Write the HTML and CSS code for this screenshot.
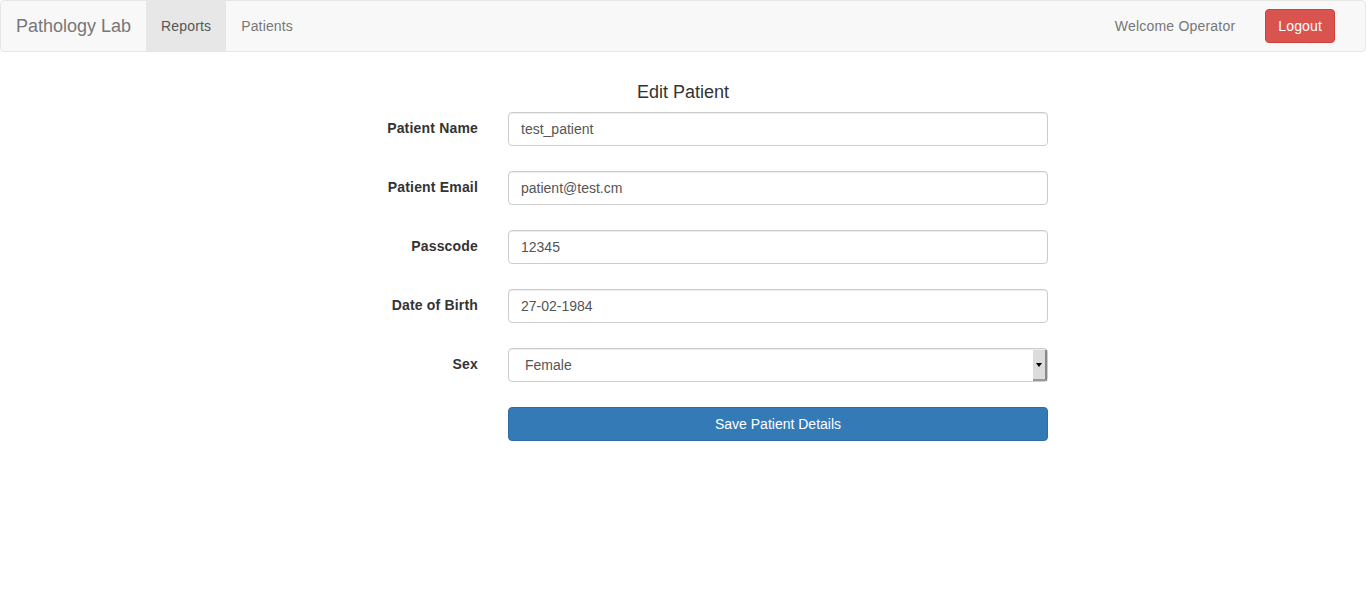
FILE: index.html
```html
<!DOCTYPE html>
<html>
<head>
<meta charset="utf-8">
<title>Edit Patient</title>
<link rel="stylesheet" href="styles.css">
</head>
<body>
<nav class="navbar">
  <div class="nav-left">
    <a class="brand" href="#">Pathology Lab</a>
    <a class="nav-link active" href="#">Reports</a>
    <a class="nav-link" href="#">Patients</a>
  </div>
  <div class="nav-right">
    <span class="welcome">Welcome Operator</span>
    <button class="btn-logout">Logout</button>
  </div>
</nav>
<main class="page">
  <h4 class="title">Edit Patient</h4>
  <form class="form">
    <div class="row">
      <label class="label">Patient Name</label>
      <input class="input" type="text" value="test_patient">
    </div>
    <div class="row">
      <label class="label">Patient Email</label>
      <input class="input" type="text" value="patient@test.cm">
    </div>
    <div class="row">
      <label class="label">Passcode</label>
      <input class="input" type="text" value="12345">
    </div>
    <div class="row">
      <label class="label">Date of Birth</label>
      <input class="input" type="text" value="27-02-1984">
    </div>
    <div class="row">
      <label class="label">Sex</label>
      <div class="select-wrap">
        <select class="select">
          <option>Female</option>
          <option>Male</option>
        </select>
        <span class="select-arrow"><span class="tri"></span></span>
      </div>
    </div>
    <div class="row">
      <span class="label"></span>
      <button type="button" class="btn-save">Save Patient Details</button>
    </div>
  </form>
</main>
</body>
</html>
```
FILE: styles.css
```css
* { box-sizing: border-box; }
html, body {
  margin: 0;
  padding: 0;
  background: #fff;
  font-family: "Liberation Sans", Arial, sans-serif;
  font-size: 14px;
  color: #333;
}
.navbar {
  height: 52px;
  background: #f8f8f8;
  border: 1px solid #e7e7e7;
  border-radius: 4px;
  display: flex;
  justify-content: space-between;
  align-items: stretch;
}
.nav-left, .nav-right {
  display: flex;
  align-items: stretch;
}
.brand {
  display: flex;
  align-items: center;
  padding: 0 15px;
  font-size: 18px;
  color: #777;
  text-decoration: none;
}
.nav-link {
  display: flex;
  align-items: center;
  padding: 0 15px;
  color: #777;
  text-decoration: none;
  letter-spacing: 0.15px;
}
.nav-link.active {
  background: #e7e7e7;
  color: #555;
}
.nav-right {
  align-items: center;
  padding-right: 30px;
}
.welcome {
  color: #777;
  margin-right: 30px;
  letter-spacing: 0.2px;
}
.btn-logout {
  height: 34px;
  padding: 0 12px;
  background: #d9534f;
  border: 1px solid #d43f3a;
  border-radius: 4px;
  color: #fff;
  font-family: inherit;
  font-size: 14px;
  letter-spacing: 0.15px;
}
.page {
  width: 730px;
  margin: 0 auto;
  padding-top: 30px;
}
.title {
  margin: 0 0 10px;
  text-align: center;
  font-size: 18px;
  font-weight: 500;
  line-height: 20px;
  color: #333;
}
.form {
  display: flex;
  flex-direction: column;
  gap: 25px;
}
.row {
  display: grid;
  grid-template-columns: 160px 540px;
  column-gap: 30px;
  align-items: start;
}
.label {
  text-align: right;
  font-weight: bold;
  padding-top: 6px;
  line-height: 20px;
  letter-spacing: 0.18px;
}
.input {
  height: 34px;
  width: 540px;
  padding: 6px 12px;
  border: 1px solid #ccc;
  border-radius: 4px;
  font-family: inherit;
  font-size: 14px;
  color: #555;
  box-shadow: inset 0 1px 1px rgba(0,0,0,.075);
  outline: none;
}
.select-wrap {
  position: relative;
  width: 540px;
  height: 34px;
}
.select {
  appearance: none;
  -webkit-appearance: none;
  width: 100%;
  height: 34px;
  padding: 6px 16px;
  border: 1px solid #ccc;
  border-radius: 4px;
  background: #fff;
  font-family: inherit;
  font-size: 14px;
  color: #555;
  box-shadow: inset 0 1px 1px rgba(0,0,0,.075);
  outline: none;
}
.select-arrow {
  position: absolute;
  right: 1px;
  top: 2px;
  width: 14px;
  height: 31px;
  background: #dcdcdc;
  border-right: 2px solid #888;
  border-bottom: 2px solid #999;
  display: flex;
  align-items: center;
  justify-content: center;
}
.tri {
  width: 0;
  height: 0;
  border-left: 3px solid transparent;
  border-right: 3px solid transparent;
  border-top: 4px solid #000;
}
.btn-save {
  height: 34px;
  width: 540px;
  background: #337ab7;
  border: 1px solid #2e6da4;
  border-radius: 4px;
  color: #fff;
  font-family: inherit;
  font-size: 14px;
}
```
